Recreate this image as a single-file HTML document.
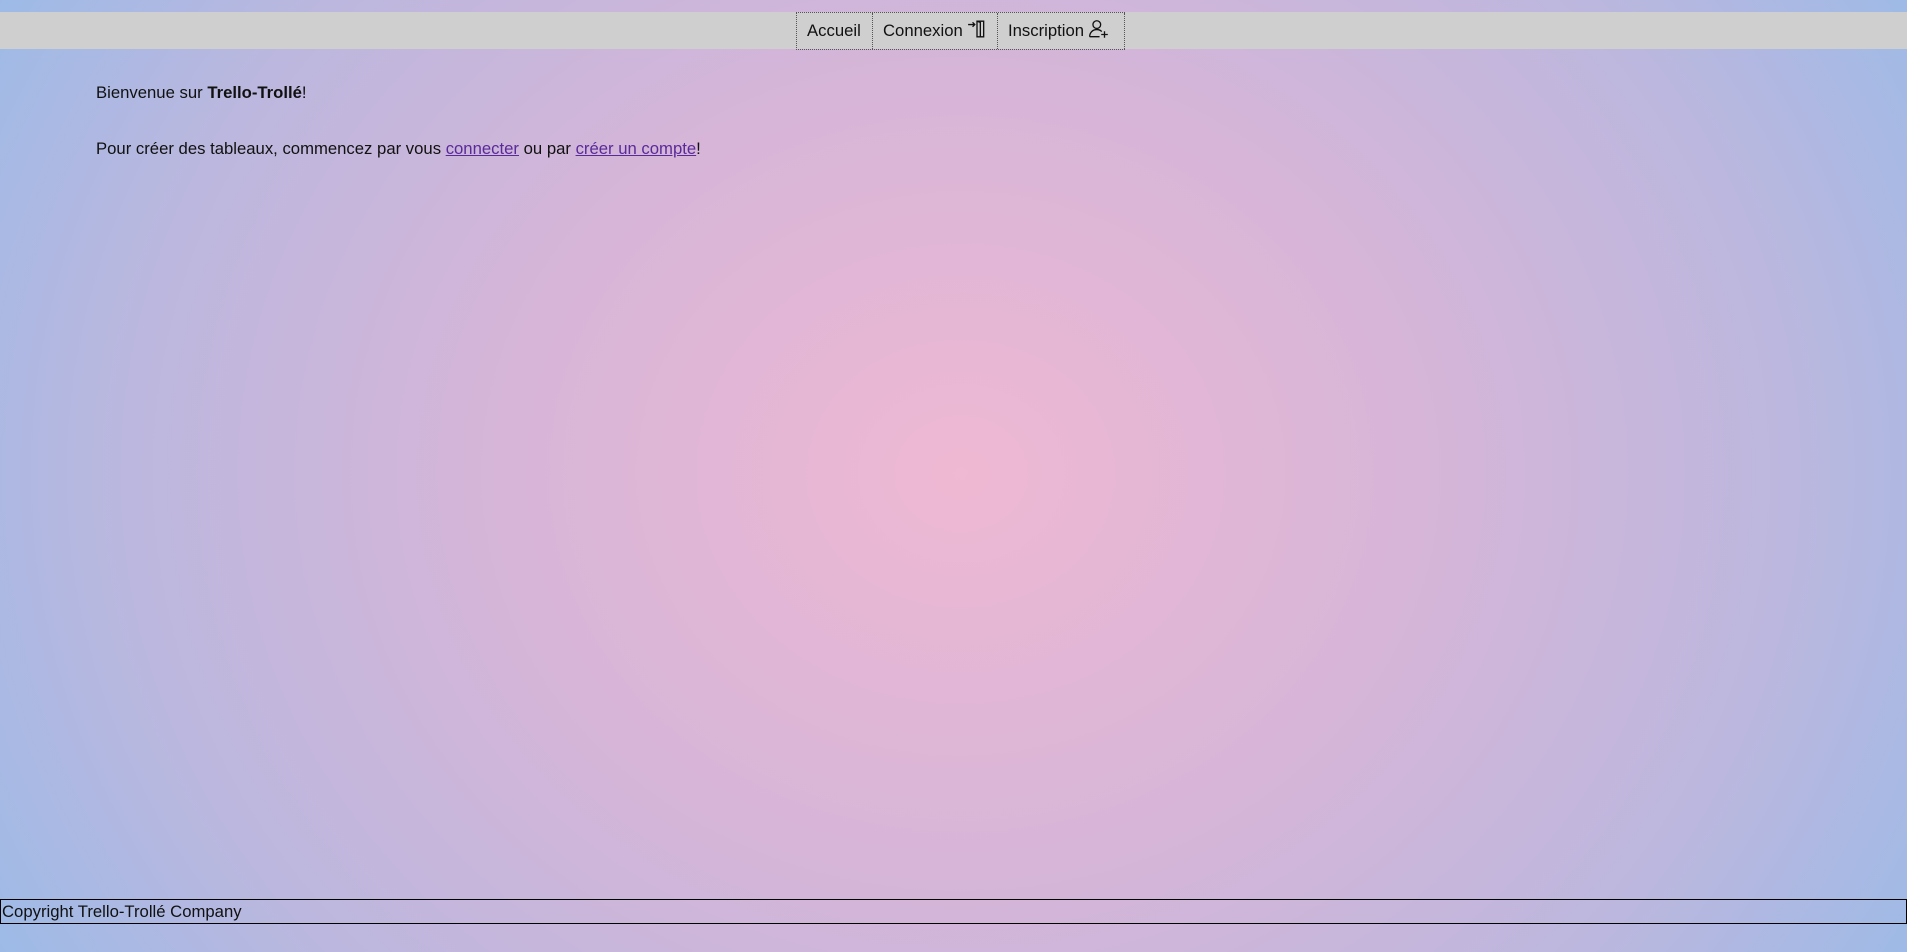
<!DOCTYPE html>
<html><head><meta charset="utf-8"><style>
html,body{margin:0;padding:0;width:1907px;height:952px;overflow:hidden}
body{background:radial-gradient(ellipse 1150px 1000px at 961px 474px,#efb8d3 0px,#d6b5d8 40%,#bcb7de 72%,#98bbe8 100%);font-family:"Liberation Sans","DejaVu Sans",sans-serif;font-size:16.7px;color:#111;position:relative}
nav{position:absolute;top:12px;left:0;width:1907px;height:37px;background:#cfcfcf}
nav .items{position:absolute;left:796px;top:0;height:36px;display:flex;border:1px dotted #555;border-right:none}
nav a{display:flex;align-items:center;padding:0 10px;border-right:1px dotted #555;color:#111;text-decoration:none;height:36px;box-sizing:border-box}
nav a svg{margin-left:4px;margin-top:-5px}
p{position:absolute;left:96px;margin:0}
a.l{color:#5a2a9a}
footer{position:absolute;left:0;top:899px;width:1907px;height:25px;box-sizing:border-box;border:1px solid #000;line-height:23px;padding-left:1px}
</style></head><body>
<nav><div class="items" style="width:328px">
<a style="width:76px">Accueil</a>
<a style="width:125px">Connexion<svg width="20" height="20" viewBox="0 0 18 18" fill="none" stroke="#111" stroke-width="1.2"><path d="M1 5h6M5 3l2 2-2 2"/><path d="M9 2h6v14H9z"/><path d="M9 2l3 1v13"/></svg></a>
<a style="width:127px">Inscription<svg width="22" height="20" viewBox="0 0 20 18" fill="none" stroke="#111" stroke-width="1.2"><circle cx="8" cy="5" r="3.5"/><path d="M1.5 16c0-4 3-6.5 6.5-6.5 2 0 3.5.7 4.5 1.8M1.5 16h9"/><path d="M15 11v6M12 14h6"/></svg></a>
</div></nav>
<p style="top:83px">Bienvenue sur <b>Trello-Trollé</b>!</p>
<p style="top:139px">Pour créer des tableaux, commencez par vous <a class="l" href="#">connecter</a> ou par <a class="l" href="#">créer un compte</a>!</p>
<footer>Copyright Trello-Trollé Company</footer>
</body></html>
